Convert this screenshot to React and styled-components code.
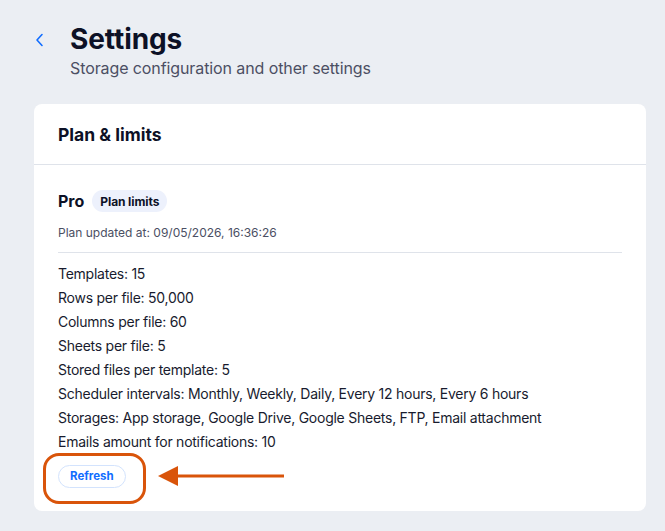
import styled, { createGlobalStyle } from "styled-components";

const COLORS = {
  page: "#ebeef3",
  card: "#ffffff",
  ink: "#0d1126",
  text: "#181b2e",
  muted: "#4b4f63",
  line: "#dfe3ea",
  blue: "#116dff",
  badge: "#edf1fc",
  mark: "#d9540a",
};

const GlobalStyle = createGlobalStyle`
  body {
    margin: 0;
    background: ${COLORS.page};
    font-family: "Inter", "Noto Sans", sans-serif;
    color: ${COLORS.text};
  }
`;

const Page = styled.div`
  min-height: 531px;
  padding: 22px 19px 21px 34px;
  box-sizing: border-box;
`;

const Header = styled.header`
  display: flex;
  align-items: flex-start;
  gap: 24px;
  margin-bottom: 24px;
`;

const BackButton = styled.button`
  border: none;
  background: none;
  padding: 0;
  margin-top: 10px;
  width: 12px;
  height: 16px;
  display: flex;
  cursor: pointer;
`;

const Titles = styled.div`
  display: flex;
  flex-direction: column;
`;

const Title = styled.h1`
  margin: 0;
  font-size: 28px;
  line-height: 34px;
  font-weight: 700;
  color: ${COLORS.ink};
  letter-spacing: -0.1px;
`;

const Subtitle = styled.p`
  margin: 0;
  font-size: 16px;
  line-height: 24px;
  color: ${COLORS.muted};
  letter-spacing: -0.1px;
`;

const Card = styled.section`
  width: 612px;
  background: ${COLORS.card};
  border-radius: 8px;
`;

const CardHeader = styled.div`
  height: 60px;
  display: flex;
  align-items: center;
  padding: 0 24px;
  border-bottom: 1px solid ${COLORS.line};
`;

const CardTitle = styled.h2`
  margin: 0;
  font-size: 17.5px;
  font-weight: 700;
  color: ${COLORS.ink};
`;

const CardBody = styled.div`
  padding: 23px 24px 23px;
`;

const PlanRow = styled.div`
  display: flex;
  align-items: center;
  gap: 8px;
  height: 26px;
`;

const PlanName = styled.span`
  font-size: 16px;
  font-weight: 700;
  color: ${COLORS.ink};
`;

const Badge = styled.span`
  display: inline-flex;
  align-items: center;
  height: 22px;
  padding: 0 8px;
  border-radius: 11px;
  background: ${COLORS.badge};
  font-size: 12px;
  font-weight: 700;
  color: ${COLORS.ink};
  letter-spacing: -0.1px;
`;

const Updated = styled.div`
  margin-top: 11px;
  font-size: 12px;
  line-height: 16px;
  color: ${COLORS.muted};
`;

const Divider = styled.hr`
  border: none;
  border-top: 1px solid ${COLORS.line};
  margin: 11px 0 9px;
`;

const Limits = styled.ul`
  list-style: none;
  margin: 0;
  padding: 0;
`;

const Limit = styled.li`
  font-size: 14px;
  line-height: 24px;
  color: ${COLORS.text};
  letter-spacing: -0.25px;
`;

const Actions = styled.div`
  position: relative;
  margin-top: 10px;
  height: 24px;
  display: flex;
  align-items: center;
`;

const RefreshButton = styled.button`
  height: 23px;
  padding: 0 11px;
  border: 1px solid #d3e3fd;
  border-radius: 12px;
  background: #fff;
  color: ${COLORS.blue};
  font-family: inherit;
  font-size: 11.5px;
  font-weight: 700;
  cursor: pointer;
`;

const Highlight = styled.div`
  position: absolute;
  left: -15px;
  top: -11px;
  width: 97px;
  height: 45px;
  border: 3px solid ${COLORS.mark};
  border-radius: 16px;
  pointer-events: none;
`;

const Arrow = styled.svg`
  position: absolute;
  left: 100px;
  top: 1px;
  pointer-events: none;
`;

const LIMITS = [
  "Templates: 15",
  "Rows per file: 50,000",
  "Columns per file: 60",
  "Sheets per file: 5",
  "Stored files per template: 5",
  "Scheduler intervals: Monthly, Weekly, Daily, Every 12 hours, Every 6 hours",
  "Storages: App storage, Google Drive, Google Sheets, FTP, Email attachment",
  "Emails amount for notifications: 10",
];

const App = () => (
  <>
    <GlobalStyle />
    <Page>
      <Header>
        <BackButton aria-label="Back">
          <svg width="12" height="16" viewBox="0 0 12 16" fill="none">
            <path
              d="M8 2.5 3 8l5 5.5"
              stroke={COLORS.blue}
              strokeWidth="1.6"
              strokeLinecap="round"
              strokeLinejoin="round"
            />
          </svg>
        </BackButton>
        <Titles>
          <Title>Settings</Title>
          <Subtitle>Storage configuration and other settings</Subtitle>
        </Titles>
      </Header>

      <Card>
        <CardHeader>
          <CardTitle>Plan &amp; limits</CardTitle>
        </CardHeader>
        <CardBody>
          <PlanRow>
            <PlanName>Pro</PlanName>
            <Badge>Plan limits</Badge>
          </PlanRow>
          <Updated>Plan updated at: 09/05/2026, 16:36:26</Updated>
          <Divider />
          <Limits>
            {LIMITS.map((item) => (
              <Limit key={item}>{item}</Limit>
            ))}
          </Limits>
          <Actions>
            <RefreshButton>Refresh</RefreshButton>
            <Highlight />
            <Arrow width="128" height="22" viewBox="0 0 128 22">
              <path d="M0 11 20 1v20z" fill={COLORS.mark} />
              <rect x="18" y="9.5" width="108" height="3" fill={COLORS.mark} />
            </Arrow>
          </Actions>
        </CardBody>
      </Card>
    </Page>
  </>
);

export default App;
